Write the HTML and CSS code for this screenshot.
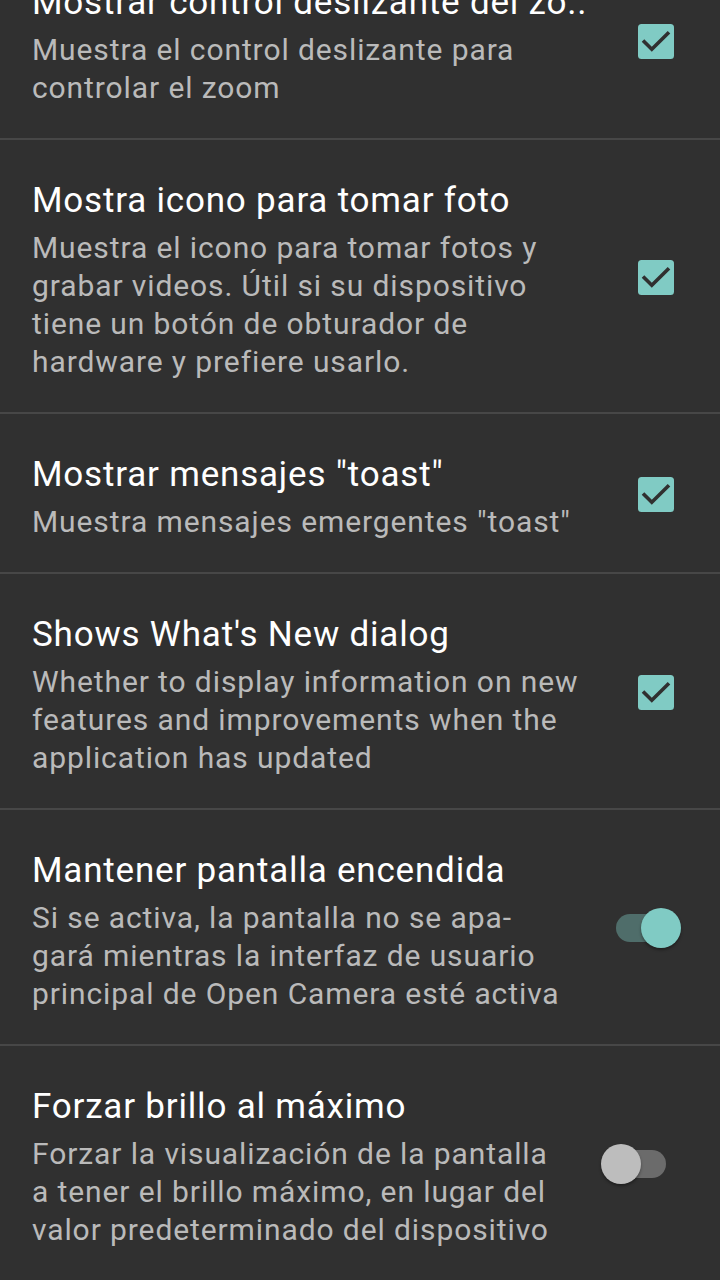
FILE: index.html
```html
<!DOCTYPE html>
<html lang="es">
<head>
<meta charset="utf-8">
<title>Ajustes</title>
<link rel="stylesheet" href="styles.css">
</head>
<body>
<div class="list">
  <div class="pref">
    <div class="text">
      <div class="title">Mostrar control deslizante del zo..</div>
      <div class="summary">Muestra el control deslizante para<br>controlar el zoom</div>
    </div>
    <div class="checkbox"><svg viewBox="0 0 36 36" width="36" height="36"><rect x="0" y="0" width="36" height="35" rx="3.5" fill="#80cbc4"/><path d="M5 16.5 L13.8 25.3 L31 8.2" fill="none" stroke="#303030" stroke-width="3.6"/></svg></div>
  </div>
  <div class="pref">
    <div class="text">
      <div class="title">Mostra icono para tomar foto</div>
      <div class="summary">Muestra el icono para tomar fotos y<br>grabar videos. Útil si su dispositivo<br>tiene un botón de obturador de<br>hardware y prefiere usarlo.</div>
    </div>
    <div class="checkbox"><svg viewBox="0 0 36 36" width="36" height="36"><rect x="0" y="0" width="36" height="35" rx="3.5" fill="#80cbc4"/><path d="M5 16.5 L13.8 25.3 L31 8.2" fill="none" stroke="#303030" stroke-width="3.6"/></svg></div>
  </div>
  <div class="pref">
    <div class="text">
      <div class="title">Mostrar mensajes "toast"</div>
      <div class="summary">Muestra mensajes emergentes "toast"</div>
    </div>
    <div class="checkbox"><svg viewBox="0 0 36 36" width="36" height="36"><rect x="0" y="0" width="36" height="35" rx="3.5" fill="#80cbc4"/><path d="M5 16.5 L13.8 25.3 L31 8.2" fill="none" stroke="#303030" stroke-width="3.6"/></svg></div>
  </div>
  <div class="pref">
    <div class="text">
      <div class="title">Shows What's New dialog</div>
      <div class="summary">Whether to display information on new<br>features and improvements when the<br>application has updated</div>
    </div>
    <div class="checkbox"><svg viewBox="0 0 36 36" width="36" height="36"><rect x="0" y="0" width="36" height="35" rx="3.5" fill="#80cbc4"/><path d="M5 16.5 L13.8 25.3 L31 8.2" fill="none" stroke="#303030" stroke-width="3.6"/></svg></div>
  </div>
  <div class="pref">
    <div class="text">
      <div class="title">Mantener pantalla encendida</div>
      <div class="summary">Si se activa, la pantalla no se apa-<br>gará mientras la interfaz de usuario<br>principal de Open Camera esté activa</div>
    </div>
    <div class="switch on"><span class="track"></span><span class="thumb"></span></div>
  </div>
  <div class="pref">
    <div class="text">
      <div class="title">Forzar brillo al máximo</div>
      <div class="summary">Forzar la visualización de la pantalla<br>a tener el brillo máximo, en lugar del<br>valor predeterminado del dispositivo</div>
    </div>
    <div class="switch off"><span class="track"></span><span class="thumb"></span></div>
  </div>
</div>
</body>
</html>
```

FILE: styles.css
```css
html, body {
  margin: 0;
  padding: 0;
  background: #303030;
  height: 100%;
  overflow: hidden;
}
body {
  font-family: Roboto, "Noto Sans", sans-serif;
  -webkit-font-smoothing: antialiased;
}
.list {
  margin-top: -58px;
}
.pref {
  display: flex;
  align-items: center;
  padding: 40px 0 31px 32px;
  border-bottom: 2px solid #474747;
}
.text {
  flex: 1;
  min-width: 0;
}
.title {
  color: #ffffff;
  font-size: 35px;
  letter-spacing: 0.8px;
  line-height: 42px;
  margin-bottom: 7px;
  white-space: nowrap;
}
.summary {
  color: #bababa;
  font-size: 30px;
  letter-spacing: 0.9px;
  line-height: 38px;
  white-space: nowrap;
}
.checkbox {
  width: 36px;
  height: 36px;
  margin: -6px 46px 0 16px;
  flex: none;
}
.checkbox svg {
  display: block;
}
.switch {
  position: relative;
  flex: none;
  width: 70px;
  height: 40px;
  margin-left: 16px;
  margin-top: -7px;
}
.switch.on {
  margin-right: 39px;
}
.switch.off {
  margin-right: 49px;
}
.track {
  position: absolute;
  left: 5px;
  top: 6px;
  width: 60px;
  height: 28px;
  border-radius: 14px;
}
.thumb {
  position: absolute;
  top: 0;
  width: 40px;
  height: 40px;
  border-radius: 50%;
  box-shadow: 0 2px 3px rgba(0, 0, 0, 0.35);
}
.on .track {
  background: #4f6d6a;
}
.on .thumb {
  right: 0;
  background: #80cbc4;
}
.off .track {
  background: #6b6b6b;
}
.off .thumb {
  left: 0;
  background: #bdbdbd;
}
```
